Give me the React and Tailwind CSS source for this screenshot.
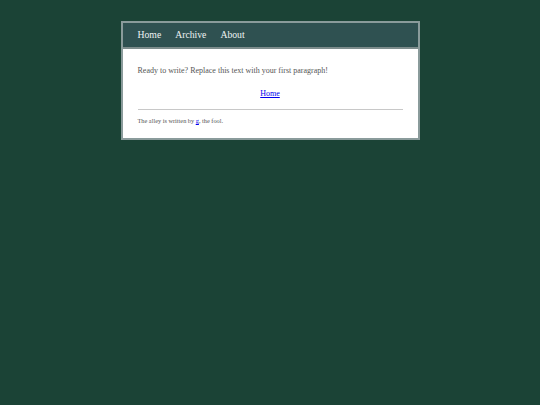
import React from 'react';

function App() {
    return (
        <div className="min-h-screen bg-[#1b4336] pt-[21px]" style={{fontFamily: '"Liberation Serif", "Times New Roman", serif'}}>
            <div className="mx-auto w-[299px] border-2 border-[#8a9b9b] bg-white">
                <nav className="flex h-[26px] items-center gap-[14px] border-b-2 border-[#7d8c8c] bg-[#2f5151] pl-[15px] text-[9.7px] text-[#eef3f3]">
                    <a href="#">Home</a>
                    <a href="#">Archive</a>
                    <a href="#">About</a>
                </nav>
                <div className="px-[15px] pt-[16px] pb-[13px] text-[#555]">
                    <p className="text-[8px] leading-[12px]">Ready to write? Replace this text with your first paragraph!</p>
                    <p className="mt-[11px] text-center text-[8px] leading-[12px]">
                        <a href="#" className="text-[#0000ee] underline">Home</a>
                    </p>
                    <hr className="mt-[9px] border-t border-[#c8c8c8]"/>
                    <p className="mt-[7px] text-[6.3px] leading-[8px]">
                        The alley is written by <a href="#" className="text-[#0000ee] underline">g</a>, the fool.
                    </p>
                </div>
            </div>
        </div>
    );
}

export default App;
